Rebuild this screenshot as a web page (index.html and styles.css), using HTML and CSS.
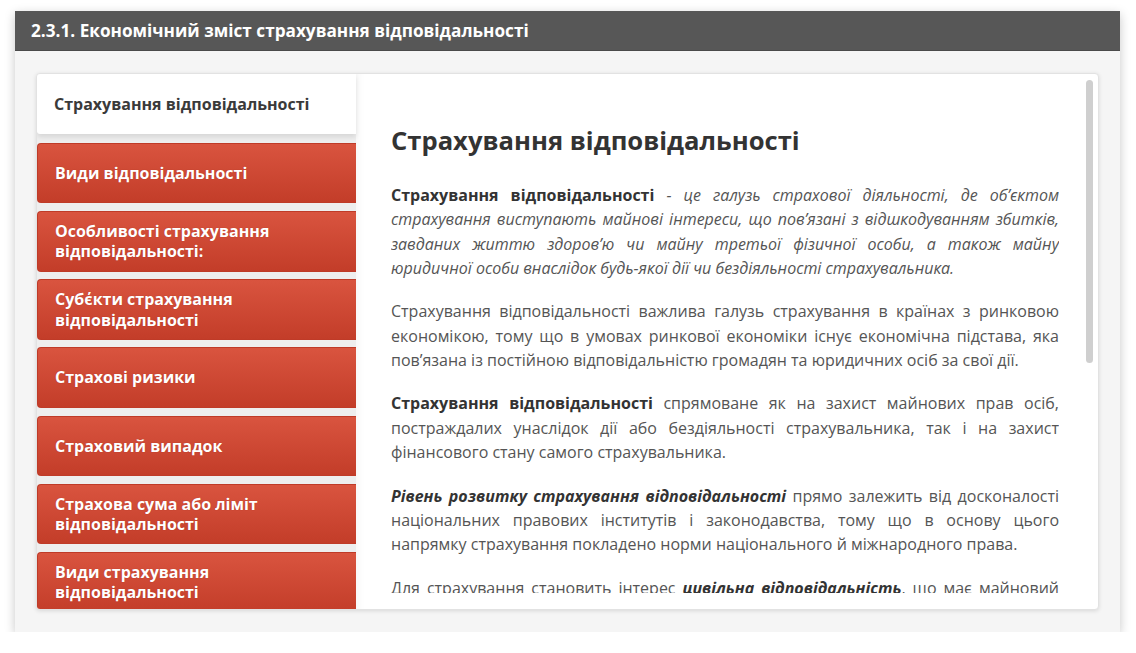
FILE: index.html
```html
<!DOCTYPE html>
<html lang="uk">
<head>
<meta charset="utf-8">
<title>2.3.1. Економічний зміст страхування відповідальності</title>
<link rel="stylesheet" href="styles.css">
</head>
<body>
<div class="panel">
  <div class="panel-head">2.3.1. Економічний зміст страхування відповідальності</div>
  <div class="panel-body">
    <div class="card">
      <nav class="tabs">
        <div class="tab tab-active">Страхування відповідальності</div>
        <div class="tab">Види відповідальності</div>
        <div class="tab">Особливості страхування відповідальності:</div>
        <div class="tab">Суб΄єкти страхування відповідальності</div>
        <div class="tab">Страхові ризики</div>
        <div class="tab">Страховий випадок</div>
        <div class="tab">Страхова сума або ліміт відповідальності</div>
        <div class="tab">Види страхування відповідальності</div>
      </nav>
      <section class="content">
        <div class="scroll">
          <h2 class="title">Страхування відповідальності</h2>
          <p><b>Страхування відповідальності</b> <i>- це галузь страхової діяльності, де об’єктом страхування виступають майнові інтереси, що пов’язані з відшкодуванням збитків, завданих життю здоров’ю чи майну третьої фізичної особи, а також майну юридичної особи внаслідок будь-якої дії чи бездіяльності страхувальника.</i></p>
          <p>Страхування відповідальності важлива галузь страхування в країнах з ринковою економікою, тому що в умовах ринкової економіки існує економічна підстава, яка пов’язана із постійною відповідальністю громадян та юридичних осіб за свої дії.</p>
          <p><b>Страхування відповідальності</b> спрямоване як на захист майнових прав осіб, постраждалих унаслідок дії або бездіяльності страхувальника, так і на захист фінансового стану самого страхувальника.</p>
          <p><b><i>Рівень розвитку страхування відповідальності</i></b> прямо залежить від досконалості національних правових інститутів і законодавства, тому що в основу цього напрямку страхування покладено норми національного й міжнародного права.</p>
          <p>Для страхування становить інтерес <b><i>цивільна відповідальність</i></b>, що має майновий характер і виражається в обов’язку відшкодувати шкоду, заподіяну іншій особі.</p>
        </div>
        <div class="scrollbar"><div class="thumb"></div></div>
      </section>
    </div>
  </div>
</div>
</body>
</html>
```

FILE: styles.css
```css
* { box-sizing: border-box; }
html, body { margin: 0; padding: 0; background: #fff; }
body {
  font-family: "Open Sans", "Noto Sans", "DejaVu Sans", sans-serif;
  padding: 11px 16px 0 15px;
}
.panel {
  width: 1105px;
  height: 621px;
  background: #f5f5f5;
  box-shadow: 0 3px 10px rgba(0,0,0,0.22);
  display: flex;
  flex-direction: column;
}
.panel-head {
  height: 40px;
  background: #575757;
  color: #fff;
  font-weight: 700;
  font-size: 17.2px;
  line-height: 40px;
  padding-left: 16px;
  border-bottom: 1px solid #4a4a4a;
}
.panel-body {
  flex: 1;
  padding: 22px 21px 22px 21px;
  min-height: 0;
}
.card {
  height: 100%;
  background: #fff;
  border: 1px solid #e2e2e2;
  border-radius: 4px;
  box-shadow: 0 1px 4px rgba(0,0,0,0.12);
  display: flex;
  overflow: hidden;
}
.tabs {
  width: 319px;
  flex: none;
  background: #eeeeee;
  display: flex;
  flex-direction: column;
  gap: 7.5px;
}
.tab {
  flex: none;
  height: 60.7px;
  display: flex;
  align-items: center;
  padding: 0 20px 0 17px;
  color: #fff;
  font-weight: 700;
  font-size: 16px;
  line-height: 20.5px;
  background: linear-gradient(#d9543f, #c33d29);
  border: 1px solid #bf3b28;
  border-right: none;
  border-radius: 4px 0 0 4px;
  text-shadow: 0 0 1px rgba(120,20,10,0.4);
}
.tab-active {
  height: 60px;
  background: #fff;
  color: #3a3a3a;
  font-size: 16px;
  font-weight: 700;
  padding-left: 17px;
  border: none;
  border-radius: 3px 0 0 3px;
  text-shadow: none;
  box-shadow: 0 3px 5px rgba(0,0,0,0.10);
  margin-bottom: 1.3px;
}
.content {
  flex: 1;
  position: relative;
  padding: 0 39px 16px 35px;
  color: #555;
  font-size: 16px;
  line-height: 24.3px;
  display: flex;
  flex-direction: column;
  min-width: 0;
  box-shadow: inset 12px 0 10px -10px rgba(0,0,0,0.04);
}
.scroll {
  flex: 1;
  min-height: 0;
  overflow: hidden;
  padding-top: 50px;
}
.title {
  margin: 0 0 25px;
  font-size: 25.6px;
  line-height: 34px;
  font-weight: 700;
  color: #333;
}
.content p {
  margin: 0 0 19.2px;
  text-align: justify;
}
.content b { color: #333; }
.scrollbar {
  position: absolute;
  top: 6px;
  right: 5px;
  width: 7px;
  height: 525px;
}
.thumb {
  width: 7px;
  height: 283px;
  background: #cfcfcf;
  border-radius: 4px;
}
```
